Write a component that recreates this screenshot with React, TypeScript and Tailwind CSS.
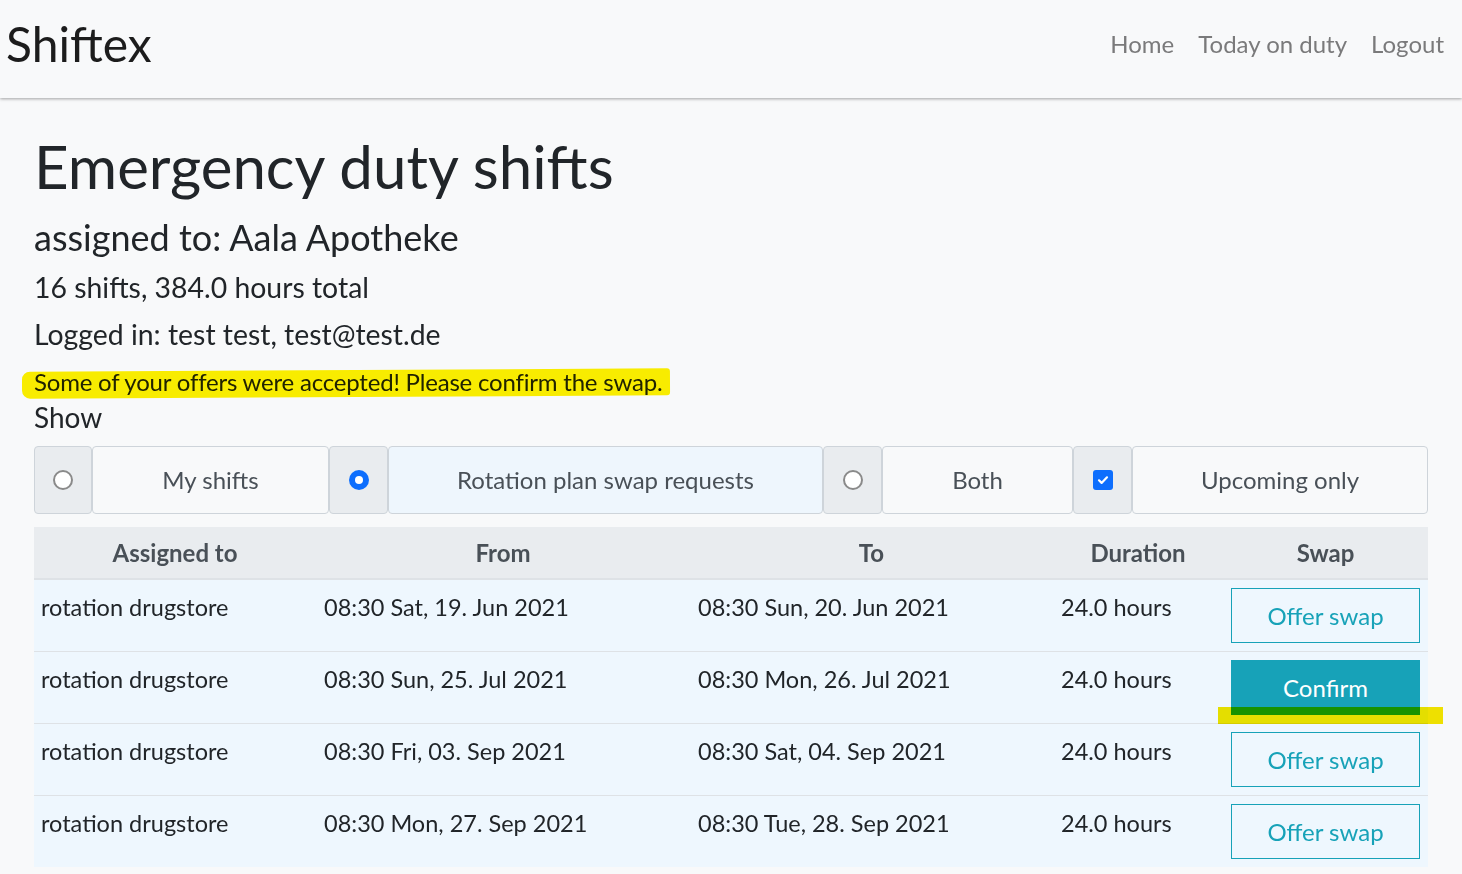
import React from 'react';

const rows = [
  { who: 'rotation drugstore', from: '08:30 Sat, 19. Jun 2021', to: '08:30 Sun, 20. Jun 2021', dur: '24.0 hours', confirm: false },
  { who: 'rotation drugstore', from: '08:30 Sun, 25. Jul 2021', to: '08:30 Mon, 26. Jul 2021', dur: '24.0 hours', confirm: true },
  { who: 'rotation drugstore', from: '08:30 Fri, 03. Sep 2021', to: '08:30 Sat, 04. Sep 2021', dur: '24.0 hours', confirm: false },
  { who: 'rotation drugstore', from: '08:30 Mon, 27. Sep 2021', to: '08:30 Tue, 28. Sep 2021', dur: '24.0 hours', confirm: false },
];

function Radio({ checked }: { checked?: boolean }) {
  return checked ? (
    <span className="w-[20px] h-[20px] rounded-full bg-[#0d6efd] flex items-center justify-center">
      <span className="w-[8px] h-[8px] rounded-full bg-white" />
    </span>
  ) : (
    <span className="w-[20px] h-[20px] rounded-full border-[2.5px] border-[#8a8a8a] bg-white" />
  );
}

function Checkbox() {
  return (
    <span className="w-[20px] h-[20px] rounded-[3px] bg-[#0d6efd] flex items-center justify-center">
      <svg width="14" height="14" viewBox="0 0 14 14" fill="none">
        <path d="M3 7.3l2.6 2.6L11 4.3" stroke="white" strokeWidth="2.2" strokeLinecap="round" strokeLinejoin="round" />
      </svg>
    </span>
  );
}

export default function App() {
  return (
    <div className="min-h-[874px] bg-[#f8f9fa] text-[#212529]" style={{ fontFamily: 'Lato, "Open Sans", sans-serif' }}>
      {/* Navbar */}
      <nav className="h-[98px] bg-[#f8f9fa] shadow-[0_1px_3px_rgba(0,0,0,0.35)] flex items-center justify-between pl-[6px] pr-[18px] relative z-10">
        <span className="text-[48px] leading-none text-[#1c1c1c] -mt-[10px]">Shiftex</span>
        <div className="flex items-center gap-[24px] text-[24px] text-[#7a7a7b] -mt-[10px]">
          <span>Home</span>
          <span>Today on duty</span>
          <span>Logout</span>
        </div>
      </nav>

      <main className="px-[34px] pt-[32px] relative">
        <h1 className="text-[60px] leading-[72px]">Emergency duty shifts</h1>
        <h2 className="text-[36px] leading-[44px] mt-[13px]">assigned to: Aala Apotheke</h2>
        <p className="text-[28.4px] leading-[36px] mt-[10px]">16 shifts, 384.0 hours total</p>
        <p className="text-[28.4px] leading-[36px] mt-[11px]">Logged in: test test, test@test.de</p>
        <div className="relative mt-[14px]">
          <span className="absolute left-[-12px] top-[4px] w-[648px] h-[27px] bg-[#fff200] rounded-l-[8px] rounded-r-[3px] mix-blend-multiply -rotate-[0.3deg]" />
          <p className="relative text-[24px] leading-[32px] tracking-[-0.2px] mix-blend-multiply">Some of your offers were accepted! Please confirm the swap.</p>
        </div>
        <p className="text-[28px] leading-[36px] mt-[1px]">Show</p>

        {/* Filter group */}
        <div className="flex h-[68px] mt-[11px] text-[24px] text-[#495057]">
          <div className="w-[58px] bg-[#e9ecef] border border-[#ced4da] rounded-[4px] flex items-center justify-center"><Radio /></div>
          <div className="w-[237px] bg-[#f8f9fa] border border-[#ced4da] rounded-[4px] flex items-center justify-center">My shifts</div>
          <div className="w-[59px] bg-[#e9ecef] border border-[#ced4da] rounded-[4px] flex items-center justify-center"><Radio checked /></div>
          <div className="w-[435px] bg-[#eef6fd] border border-[#ced4da] rounded-[4px] flex items-center justify-center">Rotation plan swap requests</div>
          <div className="w-[59px] bg-[#e9ecef] border border-[#ced4da] rounded-[4px] flex items-center justify-center"><Radio /></div>
          <div className="w-[191px] bg-[#f8f9fa] border border-[#ced4da] rounded-[4px] flex items-center justify-center">Both</div>
          <div className="w-[59px] bg-[#e9ecef] border border-[#ced4da] rounded-[4px] flex items-center justify-center"><Checkbox /></div>
          <div className="flex-1 bg-[#f8f9fa] border border-[#ced4da] rounded-[4px] flex items-center justify-center">Upcoming only</div>
        </div>

        {/* Table */}
        <table className="w-full mt-[13px] border-collapse text-[23.5px]">
          <thead>
            <tr className="bg-[#e9ecef] h-[52px] border-b-2 border-[#dee2e6] text-[#495057] font-bold">
              <th className="w-[282px] text-center text-[24px]">Assigned to</th>
              <th className="w-[374px] text-center text-[24px]">From</th>
              <th className="w-[363px] text-center text-[24px]">To</th>
              <th className="w-[170px] text-center text-[24px]">Duration</th>
              <th className="text-center text-[24px]">Swap</th>
            </tr>
          </thead>
          <tbody>
            {rows.map((r, i) => (
              <tr key={i} className="bg-[#eef7fe] border-b border-[#dee2e6] last:border-b-0 align-top">
                <td className="px-[7px] pt-[8px] leading-[38px]">{r.who}</td>
                <td className="px-[8px] pt-[8px] leading-[38px]">{r.from}</td>
                <td className="px-[8px] pt-[8px] leading-[38px]">{r.to}</td>
                <td className="px-[8px] pt-[8px] leading-[38px]">{r.dur}</td>
                <td className="px-[8px] py-[8px]">
                  <div className="relative">
                    {r.confirm ? (
                      <button className="w-full h-[55px] bg-[#17a2b8] border border-[#17a2b8] text-white text-[24px]">Confirm</button>
                    ) : (
                      <button className="w-full h-[55px] bg-transparent border border-[#17a2b8] text-[#17a2b8] text-[24px]">Offer swap</button>
                    )}
                    {r.confirm && (
                      <span className="absolute left-[-13px] right-[-23px] top-[47px] h-[17px] bg-[#f5e600] mix-blend-multiply" />
                    )}
                  </div>
                </td>
              </tr>
            ))}
          </tbody>
        </table>
      </main>
    </div>
  );
}
